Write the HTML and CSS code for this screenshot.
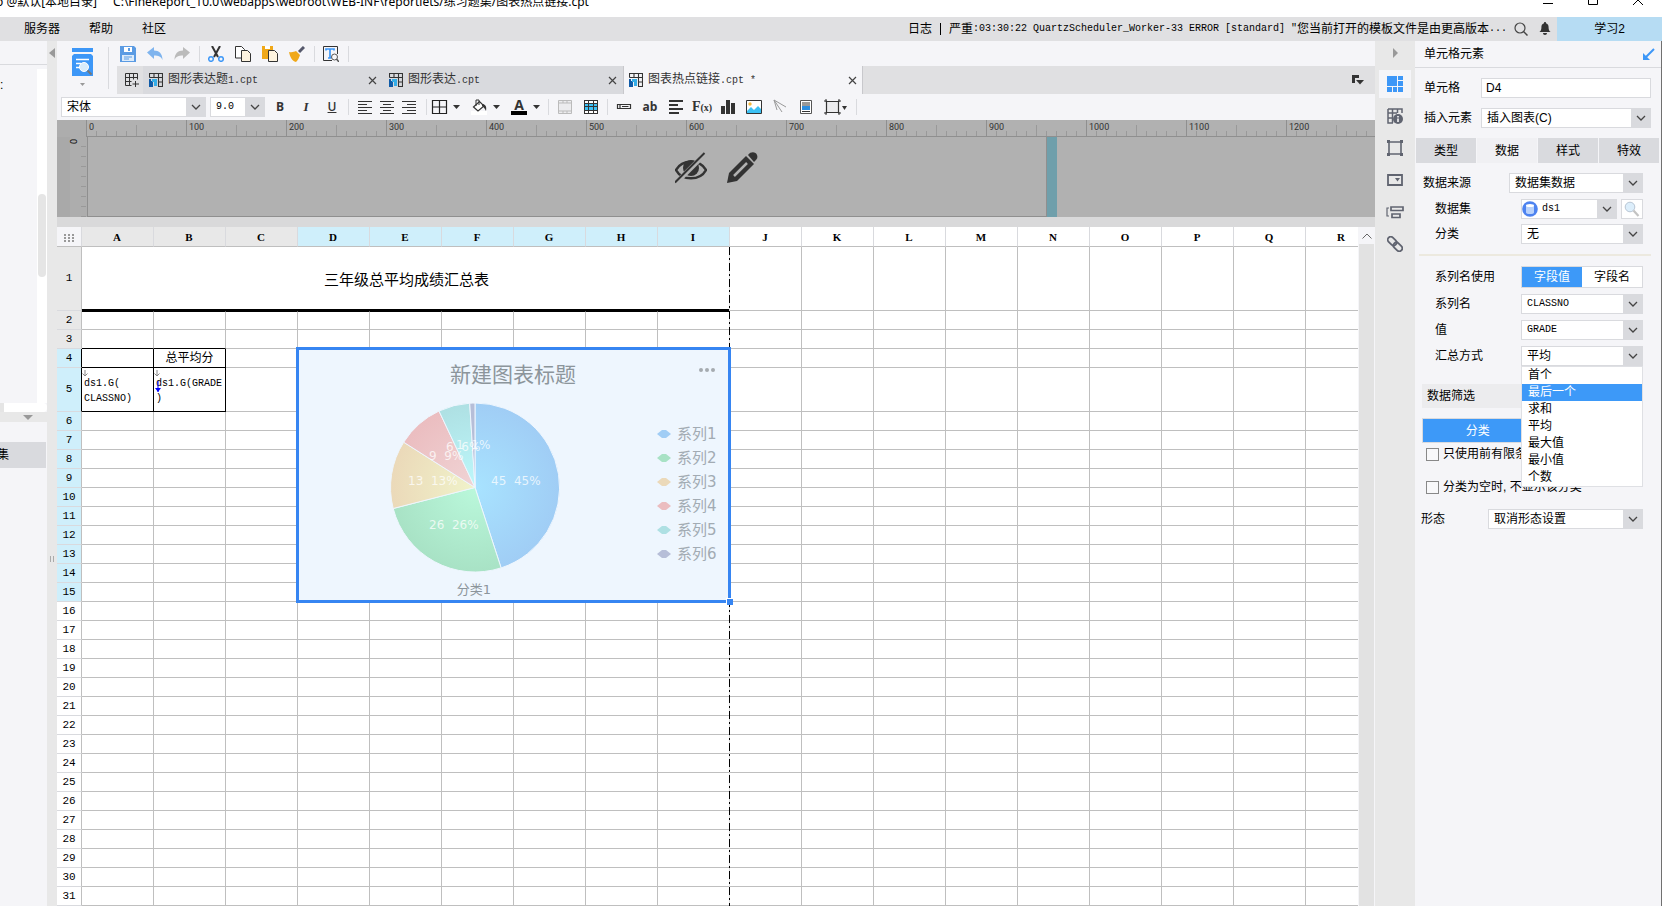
FILE: index.html
```html
<!DOCTYPE html>
<html lang="zh-CN">
<head>
<meta charset="utf-8">
<title>FineReport</title>
<link rel="stylesheet" href="styles.css">
</head>
<body>
<svg class="defs" aria-hidden="true">
  <symbol id="chevron" viewBox="0 0 20 18"><path d="M6 7l4 4 4-4" fill="none" stroke="#444" stroke-width="1.3"/></symbol>
  <symbol id="close" viewBox="0 0 9 9"><path d="M1 1l7 7M8 1l-7 7" stroke="#444" stroke-width="1.2"/></symbol>
  <symbol id="cpt" viewBox="0 0 14 14"><path d="M.5 4.500V.5h13v13H9M.5 4.500h13M5 .5v4M9.500 .5v13M9 9h4.500" fill="none" stroke="#333" stroke-width="1.1"/><path d="M0 6h2v2h2v6H0z" fill="#0f5ba8"/><path d="M3 6h5v7H5V9H3z" fill="#35aee8"/></symbol>
  <symbol id="caret" viewBox="0 0 7 4"><path d="M0 0h7L3.500 4z" fill="#333"/></symbol>
</svg>

<header class="titlebar">
  <span class="titlebar__env">o @默认[本地目录]</span>
  <span class="titlebar__path">C:\FineReport_10.0\webapps\webroot\WEB-INF\reportlets/练习题集/图表热点链接.cpt</span>
  <div class="titlebar__controls">
    <button aria-label="最小化"><svg width="11" height="11"><path d="M0 8.500h10" stroke="#000"/></svg></button>
    <button aria-label="最大化"><svg width="11" height="11"><path d="M.5 .5h9v9h-9z" fill="none" stroke="#000"/></svg></button>
    <button aria-label="关闭"><svg width="11" height="11"><path d="M0 0l10 10M10 0L0 10" stroke="#000"/></svg></button>
  </div>
</header>

<nav class="menubar">
  <button class="menubar__item">服务器</button>
  <button class="menubar__item">帮助</button>
  <button class="menubar__item">社区</button>
  <div class="log">
    <span>日志</span><span class="log__bar"></span><span>严重</span><span class="mono">:03:30:22 QuartzScheduler_Worker-33 ERROR [standard] "</span><span>您当前打开的模板文件是由更高版本</span><span class="mono">...</span>
  </div>
  <button class="menubar__icon" aria-label="搜索"><svg width="14" height="14"><circle cx="6" cy="6" r="5" fill="none" stroke="#444" stroke-width="1.200"/><path d="M9.500 9.500l4 4" stroke="#444" stroke-width="1.500"/></svg></button>
  <button class="menubar__icon menubar__icon--bell" aria-label="通知"><svg width="12" height="14"><path d="M6 0c.8 0 1 .6 1 1.200C9 1.800 9.600 3.500 9.600 5.500c0 2.500.6 3.500 2 4.500H.4c1.400-1 2-2 2-4.500 0-2 .6-3.700 2.600-4.300C5 .6 5.200 0 6 0zM4 11h4c0 1-.8 2-2 2s-2-1-2-2z" fill="#333"/></svg></button>
  <button class="menubar__user">学习2</button>
</nav>

<div class="workspace">
  <aside class="left">
    <div class="left__top"><div class="left__tools"></div>
      <div class="left__tree"><span class="left__fragment">:</span><div class="left__track"><div class="left__thumb"></div></div></div>
      <div class="left__hscroll"></div>
    </div>
    <div class="left__split"><svg width="10" height="5"><path d="M0 0h10L5 5z" fill="#999"/></svg></div>
    <div class="left__bottom"><div class="left__row">集</div></div>
  </aside>
  <div class="splitter">
    <svg width="6" height="10"><path d="M6 0v10L0 5z" fill="#999"/></svg>
    <svg width="4" height="6"><path d="M.5 0v6M3.500 0v6" stroke="#aaa"/></svg>
  </div>

  <main class="main">
    <div class="tools">
      <button class="preview" aria-label="预览">
        <svg width="22" height="28"><path d="M0 0h21v4H0zM0 8l2-2h17l2 2v20H0z" fill="#3d97f7"/><path d="M4 11.500h13M4 15.500h5M4 19.500h4" stroke="#fff" stroke-width="1.500"/><circle cx="12" cy="19" r="4.500" fill="#d9ecfb" stroke="#fff"/><path d="M15.500 22.500l4 4" stroke="#777" stroke-width="2"/></svg>
        <svg width="5" height="3"><path d="M0 0h5L2.500 3z" fill="#999"/></svg>
      </button>
      <span class="sep sep--tall"></span>
      <div class="tools__right">
        <div class="quick">
          <div class="group">
            <button aria-label="保存"><svg width="16" height="16"><path d="M0 0h14l2 2v14H0z" fill="#5b9be3"/><path d="M4 1h8v5H4z" fill="#fff"/><path d="M8 2h2v3H8z" fill="#5b9be3"/><path d="M2 9h12v6H2z" fill="#dcebfa"/><path d="M4 11h8M4 13h5" stroke="#5b9be3"/></svg></button>
            <button aria-label="撤销"><svg width="16" height="16"><path d="M0 6.500L7 1v3.500c5 0 8.500 3 8.500 9.500-1.500-3.500-4-4.500-8.500-4.500V13z" fill="#7fb4ee"/></svg></button>
            <button aria-label="重做"><svg width="16" height="16"><path d="M16 6.500L9 1v3.500C4 4.500.5 7.500.5 14 2 10.500 4.500 9.500 9 9.500V13z" fill="#bbb"/></svg></button>
          </div>
          <span class="sep"></span>
          <div class="group">
            <button aria-label="剪切"><svg width="16" height="16"><path d="M4 0l6 11M12 0L6 11" stroke="#333" stroke-width="2"/><circle cx="3" cy="13" r="2.300" fill="none" stroke="#3d97f7" stroke-width="1.500"/><circle cx="13" cy="13" r="2.300" fill="none" stroke="#3d97f7" stroke-width="1.500"/></svg></button>
            <button aria-label="复制"><svg width="16" height="16"><path d="M.5 .5h6l3 3V12h-9z" fill="#fff" stroke="#333"/><path d="M6.500 4.500h6l3 3v8h-9z" fill="#fdf3df" stroke="#333"/></svg></button>
            <button aria-label="粘贴"><svg width="16" height="16"><path d="M0 0h11v13H0z" fill="#f0a818"/><path d="M3 0h5v3H3z" fill="#fff"/><path d="M6.500 4.500h6l3 3v8h-9z" fill="#fdf3df" stroke="#333"/></svg></button>
            <button aria-label="格式刷"><svg width="16" height="16"><path d="M15 1l-5 5" stroke="#55586b" stroke-width="3"/><path d="M0 6c3 .5 5 0 7-1l4 4c-1 3-2 5-4 7-4-1-6-5-7-10z" fill="#f0a818"/></svg></button>
          </div>
          <span class="sep"></span>
          <div class="group"><button aria-label="查找"><svg width="16" height="16"><path d="M9 14.500H.5V.5h14V8" fill="none" stroke="#333"/><path d="M3 4.500V3h8v1.500M7 3v9M5 12h3.500" fill="none" stroke="#3d97f7" stroke-width="1.700"/><circle cx="11.500" cy="11" r="3" fill="#f5f5f8" stroke="#555"/><path d="M13.500 13l2.500 3" stroke="#555" stroke-width="1.500"/></svg></button></div>
          <span class="sep"></span>
        </div>
        <div class="tabs">
          <button class="tabs__new" aria-label="新建"><svg width="14" height="14"><path d="M.5 .5h12v6M.5 .5v12h6M.5 4.500h12M4.500 .5v12M8.500 .5v6M.5 8.500h6M10.500 8v6M7.500 11h6.500" fill="none" stroke="#333"/></svg></button>
          <button class="tab"><svg width="14" height="14"><use href="#cpt"/></svg><span>图形表达题<i class="mono">1.cpt</i></span><svg class="tab__x" width="9" height="9"><use href="#close"/></svg></button>
          <button class="tab"><svg width="14" height="14"><use href="#cpt"/></svg><span>图形表达<i class="mono">.cpt</i></span><svg class="tab__x" width="9" height="9"><use href="#close"/></svg></button>
          <button class="tab tab--on"><svg width="14" height="14"><use href="#cpt"/></svg><span>图表热点链接<i class="mono">.cpt *</i></span><svg class="tab__x" width="9" height="9"><use href="#close"/></svg></button>
          <button class="tabs__list" aria-label="标签列表"><svg width="12" height="10"><path d="M0 0h7v3H3v5H0z" fill="#333"/><path d="M4 5h8L8 9.500z" fill="#333"/></svg></button>
        </div>
      </div>
    </div>

    <div class="format">
      <div class="combo combo--font"><select aria-label="字体"><option>宋体</option></select><svg class="combo__arrow"><use href="#chevron"/></svg></div>
      <div class="combo combo--size"><select class="mono" aria-label="字号"><option>9.0</option></select><svg class="combo__arrow"><use href="#chevron"/></svg></div>
      <div class="group group--a">
        <button class="glyph">B</button><button class="glyph glyph--i">I</button><button class="glyph glyph--u">U</button>
      </div>
      <span class="sep"></span>
      <div class="group group--b">
        <button aria-label="左对齐"><svg width="16" height="16"><path d="M1 2.500h14M1 5.500h9M1 8.500h14M1 11.500h9M1 14.500h14" stroke="#333"/></svg></button>
        <button aria-label="居中"><svg width="16" height="16"><path d="M1 2.500h14M4 5.500h8M1 8.500h14M4 11.500h8M1 14.500h14" stroke="#333"/></svg></button>
        <button aria-label="右对齐"><svg width="16" height="16"><path d="M1 2.500h14M6 5.500h9M1 8.500h14M6 11.500h9M1 14.500h14" stroke="#333"/></svg></button>
      </div>
      <span class="sep sep--tight"></span>
      <div class="group">
        <button class="wide" aria-label="边框"><svg width="30" height="16"><path d="M1.500 1.500h14v13h-14zM8.500 1.500v13M1.500 8h14" fill="none" stroke="#222" stroke-width="1.200"/><path d="M22 6h7l-3.500 4z" fill="#333"/></svg></button>
        <button class="wide" aria-label="背景"><svg width="30" height="16"><path d="M0 12h16v4H0z" fill="#fff"/><path d="M2.500 8l6-5.500 4.500 4.500-6 5z" fill="#fff" stroke="#333" stroke-width="1.200"/><path d="M5 7V1h3v5" fill="none" stroke="#333"/><path d="M11 5c3 0 5 2 4 7-1-2-2-4-4-5z" fill="#333"/><path d="M22 6h7l-3.500 4z" fill="#333"/></svg></button>
        <button class="wide fontcolor" aria-label="字体颜色"><span>A</span><svg width="7" height="4"><use href="#caret"/></svg></button>
      </div>
      <span class="sep"></span>
      <div class="group">
        <button aria-label="合并单元格"><svg width="16" height="16"><path d="M1.500 1.500h13v13h-13zM1.500 4h13M1.500 12h13M6 1.500V4M10 1.500V4M6 12v2.500M10 12v2.500" fill="#ececee" stroke="#bbb"/></svg></button>
        <button aria-label="取消合并"><svg width="16" height="16"><path d="M1 1h14v14H1z" fill="#333"/><path d="M2 2h3v2H2zM6 2h4v2H6zM11 2h3v2h-3zM2 12h3v2H2zM6 12h4v2H6zM11 12h3v2h-3z" fill="#fff"/><path d="M2 5h3v2H2zM6 5h4v2H6zM11 5h3v2h-3zM2 8h3v3H2zM6 8h4v3H6zM11 8h3v3h-3z" fill="#3cc1f4"/></svg></button>
      </div>
      <span class="sep"></span>
      <div class="group">
        <button aria-label="控件"><svg width="16" height="16"><path d="M1.500 5.500h13v4h-13zM4 6v3M6 7.500h6.500" fill="none" stroke="#333" stroke-width="1.200"/></svg></button>
        <button class="glyph glyph--ab">ab</button>
        <button aria-label="段落"><svg width="16" height="16"><path d="M1 2h14M1 6h9M1 10h14M1 14h10" stroke="#333" stroke-width="1.800"/></svg></button>
        <button class="glyph glyph--fx">F<small>(x)</small></button>
        <button aria-label="图表"><svg width="16" height="16"><path d="M1 7h4v8H1zM6 1h4v14H6zM11 4h4v11h-4z" fill="#333"/></svg></button>
        <button aria-label="图片"><svg width="16" height="16"><path d="M.5 1.500h15v13H.5z" fill="#fff" stroke="#333"/><circle cx="4" cy="5" r="1.700" fill="#f5b83d"/><path d="M1 12l4-4 3 3 4-4 3 3v4H1z" fill="#3cc1f4"/></svg></button>
        <button aria-label="斜线"><svg width="16" height="16"><path d="M14 8L2 1l8 12M2 1l3 10" fill="none" stroke="#999"/></svg></button>
        <button aria-label="子报表"><svg width="16" height="16"><path d="M2.500 1.500h11v13h-11z" fill="#fff" stroke="#555"/><path d="M4 4h8M4 6h8M4 12.500h8" stroke="#333"/><path d="M4 7h8v4H4z" fill="#2b8de0"/></svg></button>
        <button class="wide" aria-label="冻结"><svg width="24" height="16"><path d="M2.500 2.500h12v11h-12z" fill="#ececee" stroke="#333" stroke-width="1.200"/><path d="M0 2h3M14 2h3M0 14h3M14 14h3M2 0v3M15 0v3M2 13v3M15 13v3" stroke="#333"/><path d="M18 7h5l-2.500 4z" fill="#333"/></svg></button>
      </div>
      <span class="sep"></span>
    </div>

    <section class="ruler">
      <div class="ruler__top"><div class="ruler__scale" id="scale"></div></div>
      <div class="ruler__body">
        <div class="ruler__side"><span>0</span></div>
        <div class="page">
          <svg width="32" height="32"><path d="M1 18C7 7 25 7 31 18 25 29 7 29 1 18z" fill="none" stroke="#333" stroke-width="2.500"/><circle cx="16" cy="16" r="8" fill="#333"/><path d="M0 32L30 2" stroke="#b1b1b1" stroke-width="5"/><path d="M0 30.500L29.500 1" stroke="#333" stroke-width="2"/></svg>
          <svg width="32" height="32"><path d="M1 31l2-10L20 4l8 8-17 17z" fill="#333"/><path d="M22 3c3-4 8-3 9 0s0 4-3 7z" fill="#333"/><path d="M8 24L21 11" stroke="#b1b1b1" stroke-width="2.500"/></svg>
        </div>
        <div class="page__edge"></div>
      </div>
    </section>

    <section class="sheetwrap">
      <div class="sheet">
        <table class="grid"><thead id="cols"></thead><tbody id="rows"></tbody></table>
        <div class="pagebreak"></div>
        <div class="chart">
          <svg width="429" height="250" viewBox="3 3 429 250" role="img" aria-label="新建图表标题">
            <defs>
              <radialGradient id="g1" gradientUnits="userSpaceOnUse" cx="0" cy="0" r="85"><stop offset="0" stop-color="#a8e3ff"/><stop offset="1" stop-color="#a0cdf5"/></radialGradient>
              <radialGradient id="g2" gradientUnits="userSpaceOnUse" cx="0" cy="0" r="85"><stop offset="0" stop-color="#baf8db"/><stop offset="1" stop-color="#a8e2c5"/></radialGradient>
              <radialGradient id="g3" gradientUnits="userSpaceOnUse" cx="0" cy="0" r="85"><stop offset="0" stop-color="#f0f3ca"/><stop offset="1" stop-color="#ebd9b9"/></radialGradient>
              <radialGradient id="g4" gradientUnits="userSpaceOnUse" cx="0" cy="0" r="85"><stop offset="0" stop-color="#f0d4d5"/><stop offset="1" stop-color="#ebbdc0"/></radialGradient>
              <radialGradient id="g5" gradientUnits="userSpaceOnUse" cx="0" cy="0" r="85"><stop offset="0" stop-color="#bdf8fb"/><stop offset="1" stop-color="#aee0e3"/></radialGradient>
            </defs>
            <text x="217" y="35" class="chart__title">新建图表标题</text>
            <g fill="#a5abb0"><circle cx="405" cy="23" r="2"/><circle cx="411" cy="23" r="2"/><circle cx="417" cy="23" r="2"/></g>
            <g transform="translate(179 140.500)" stroke="#eef6fe">
              <path fill="url(#g1)" d="M0 0V-84.500A84.500 84.500 0 0 1 26.100 80.400z"/>
              <path fill="url(#g2)" d="M0 0L26.100 80.400A84.500 84.500 0 0 1-81.800 21z"/>
              <path fill="url(#g3)" d="M0 0L-81.800 21A84.500 84.500 0 0 1-71.300-45.300z"/>
              <path fill="url(#g4)" d="M0 0L-71.300-45.300A84.500 84.500 0 0 1-36-76.500z"/>
              <path fill="url(#g5)" d="M0 0L-36-76.500A84.500 84.500 0 0 1-5.300-84.300z"/>
              <path fill="#b6bed8" d="M0 0L-5.300-84.300A84.500 84.500 0 0 1 0-84.500z"/>
            </g>
            <g class="chart__labels">
              <text x="195" y="138">45  45%</text><text x="133" y="182">26  26%</text><text x="112" y="138">13  13%</text>
              <text x="133" y="113">9  9%</text><text x="150" y="104">6  6%</text><text x="160" y="102">1  1%</text>
            </g>
            <text x="178" y="247" class="chart__axis">分类1</text>
            <g id="legend" class="chart__legend"></g>
          </svg>
          <span class="chart__handle"></span>
        </div>
      </div>
      <div class="vscroll"><button aria-label="向上滚动"><svg width="10" height="6"><path d="M.5 5.500L5 1l4.500 4.500" fill="none" stroke="#666"/></svg></button></div>
    </section>
  </main>

  <nav class="rail">
    <svg class="rail__fold" width="5" height="10"><path d="M0 0v10l5-5z" fill="#999"/></svg>
    <button class="rail__on" aria-label="单元格元素"><svg width="16" height="16"><path d="M0 0h10v10H0zM11 0h5v4h-5zM11 5h5v5h-5zM0 11h5v5H0zM6 11h4v5H6zM11 11h5v5h-5z" fill="#3d97f7"/></svg></button>
    <button aria-label="单元格属性"><svg width="16" height="16"><path d="M1 1h14v4M1 1v14h5M1 5h9M1 10h5M5.500 1v14M10.500 1v4" fill="none" stroke="#606470" stroke-width="1.500"/><circle cx="11" cy="11" r="5" fill="#606470"/><path d="M11 8v1.500M11 10.500V14" stroke="#fff" stroke-width="1.500"/></svg></button>
    <button aria-label="悬浮元素"><svg width="16" height="16"><path d="M2 2h12v12H2z" fill="none" stroke="#606470" stroke-width="1.600"/><path d="M0 0h3v3H0zM13 0h3v3h-3zM0 13h3v3H0zM13 13h3v3h-3z" fill="#606470"/></svg></button>
    <button aria-label="控件设置"><svg width="16" height="16"><path d="M1 3h14v10H1z" fill="none" stroke="#606470" stroke-width="1.800"/><path d="M8 6h5l-2.500 3.500z" fill="#606470"/></svg></button>
    <button aria-label="条件属性"><svg width="18" height="16"><path d="M3 4H1v8h2" fill="none" stroke="#606470" stroke-width="1.200"/><path d="M5 3h12v3.500H5zM6 10h8v3.500H6z" fill="none" stroke="#606470" stroke-width="1.700"/></svg></button>
    <button aria-label="超级链接"><svg width="16" height="16"><g transform="rotate(45 8 8)" fill="none" stroke="#606470" stroke-width="1.800"><rect x="-1" y="5" width="10" height="6" rx="3"/><rect x="7" y="5" width="10" height="6" rx="3"/></g></svg></button>
  </nav>

  <aside class="panel">
    <div class="panel__head"><h2>单元格元素</h2><button aria-label="收起"><svg width="12" height="12"><path d="M11 1L2 10" stroke="#3d97f7" stroke-width="2"/><path d="M0 5v7h7z" fill="#3d97f7"/></svg></button></div>
    <form class="form">
      <div class="field field--wide gap-l"><label for="cell">单元格</label><input id="cell" class="w-170" value="D4"></div>
      <div class="field field--wide gap-l"><label for="ins">插入元素</label><div class="combo w-170"><select id="ins"><option>插入图表(C)</option></select><svg class="combo__arrow"><use href="#chevron"/></svg></div></div>
      <div class="ptabs gap-l"><button type="button">类型</button><button type="button" class="on">数据</button><button type="button">样式</button><button type="button">特效</button></div>
      <div class="field gap-l"><label for="src">数据来源</label><div class="combo w-134"><select id="src"><option>数据集数据</option></select><svg class="combo__arrow"><use href="#chevron"/></svg></div></div>
      <div class="field field--in gap-m"><label for="ds">数据集</label>
        <div class="dsrow w-122"><div class="combo combo--ds"><select id="ds" class="mono"><option>ds1</option></select><svg class="combo__icon" width="16" height="16"><circle cx="8" cy="8" r="7.800" fill="#4d83f0"/><path d="M4 4.500v7c0 2 8 2 8 0v-7z" fill="#b9d2fb"/><ellipse cx="8" cy="4.500" rx="4" ry="1.500" fill="#fff"/></svg><svg class="combo__arrow"><use href="#chevron"/></svg></div>
        <button type="button" class="find" aria-label="预览数据"><svg width="16" height="16"><circle cx="6" cy="6" r="4.800" fill="#dceefb" stroke="#b9c6d4"/><path d="M9.500 9.500l5 5.500" stroke="#c3c3c3" stroke-width="2.200"/></svg></button></div></div>
      <div class="field field--in gap-s"><label for="cat">分类</label><div class="combo w-122"><select id="cat"><option>无</option></select><svg class="combo__arrow"><use href="#chevron"/></svg></div></div>
      <hr class="rule">
      <div class="field field--in gap-l"><span>系列名使用</span><div class="seg w-122"><button type="button" class="on">字段值</button><button type="button">字段名</button></div></div>
      <div class="field field--in gap-m"><label for="ser">系列名</label><div class="combo w-122"><select id="ser" class="mono"><option>CLASSNO</option></select><svg class="combo__arrow"><use href="#chevron"/></svg></div></div>
      <div class="field field--in gap-m"><label for="val">值</label><div class="combo w-122"><select id="val" class="mono"><option>GRADE</option></select><svg class="combo__arrow"><use href="#chevron"/></svg></div></div>
      <div class="field field--in gap-m"><label for="agg">汇总方式</label>
        <div class="combo w-122"><select id="agg"><option>平均</option></select><svg class="combo__arrow"><use href="#chevron"/></svg>
          <ul class="menu"><li>首个</li><li class="on">最后一个</li><li>求和</li><li>平均</li><li>最大值</li><li>最小值</li><li>个数</li></ul>
        </div></div>
      <h3 class="band">数据筛选</h3>
      <div class="seg seg--filter"><button type="button" class="on">分类</button><button type="button" aria-label="系列"></button></div>
      <label class="check"><input type="checkbox">只使用前有限条</label>
      <label class="check check--2"><input type="checkbox">分类为空时, 不显示该分类</label>
      <div class="field field--out"><label for="shape">形态</label><div class="combo w-155"><select id="shape"><option>取消形态设置</option></select><svg class="combo__arrow"><use href="#chevron"/></svg></div></div>
    </form>
  </aside>
</div>
<script src="sheet.js"></script>
</body>
</html>
```
FILE: styles.css
```css
* { box-sizing: border-box; }
body {
  margin: 0; height: 100vh; overflow: hidden; display: flex; flex-direction: column;
  font: 12px/16px "Liberation Sans", "Noto Sans CJK SC", sans-serif; color: #000; background: #f5f5f8;
}
button, input, select { font: inherit; color: inherit; margin: 0; padding: 0; border: 0; background: none; border-radius: 0; }
svg { display: block; flex: none; }
.defs { position: absolute; width: 0; height: 0; }
.mono { font-family: "Liberation Mono", "Noto Sans CJK SC", monospace; font-size: 10px; font-style: normal; }

.titlebar { height: 17px; flex: none; display: flex; gap: 16px; overflow: hidden; background: #fff; white-space: nowrap; font: 12px/4px "Noto Sans", "Noto Sans CJK SC", sans-serif; }
.titlebar__env { margin-left: -4px; }
.titlebar__controls { margin-left: auto; display: flex; gap: 34px; padding-right: 18px; height: 6px; align-items: flex-end; }

.menubar { height: 24px; flex: none; display: flex; align-items: center; background: #e0e0e2; padding-left: 24px; white-space: nowrap; }
.menubar__item { margin-right: 29px; }
.log { margin-left: auto; display: flex; align-items: center; white-space: pre; }
.log__bar { width: 1px; height: 12px; background: #000; margin: 0 8px; }
.menubar__icon { width: 14px; margin-left: 7px; }
.menubar__icon--bell { margin: 0 4px 0 11px; }
.menubar__user { width: 105px; height: 24px; background: #b6dcf3; }

.workspace { flex: 1; min-height: 0; display: flex; }
.left { width: 47px; flex: none; display: flex; flex-direction: column; }
.left__top { height: 371px; display: flex; flex-direction: column; }
.left__tools { height: 24px; border-bottom: 1px solid #d9dade; margin-bottom: 4px; }
.left__tree { flex: 1; display: flex; justify-content: space-between; overflow: hidden; }
.left__fragment { padding-top: 8px; width: 3px; overflow: hidden; }
.left__track { width: 10px; background: #fff; padding: 125px 1px 0; }
.left__thumb { height: 83px; border-radius: 4px; background: #e5e5e5; }
.left__hscroll { height: 9px; background: #fff; border-left: 4px solid #e5e5e5; border-radius: 0 4px 4px 0; }
.left__split { height: 10px; background: #e8e8e8; display: flex; justify-content: center; align-items: center; padding-left: 8px; }
.left__bottom { padding-top: 20px; }
.left__row { height: 26px; margin-right: 1px; background: #d9dade; line-height: 26px; overflow: hidden; text-indent: -3px; }
.splitter { width: 10px; flex: none; background: #e8e8e8; display: flex; flex-direction: column; align-items: center; padding-top: 7px; gap: 498px; }

.main { flex: 1; min-width: 0; display: flex; flex-direction: column; }
.tools { display: flex; height: 53px; flex: none; }
.preview { width: 51px; display: flex; flex-direction: column; align-items: center; gap: 7px; padding-top: 7px; justify-content: flex-start; }
.sep { width: 1px; height: 16px; background: #d9dade; margin: 0 8px; flex: none; }
.sep--tall { height: 42px; margin: 6px 8px 0 0; }
.sep--tight { margin: 0 4px 0 9px; }
.tools__right { flex: 1; min-width: 0; }
.quick { height: 25px; display: flex; align-items: center; padding-left: 3px; }
.quick .group { gap: 11px; }
.quick .sep { margin: 0 8px 0 9px; }
.group { display: flex; gap: 10px; align-items: center; }
.group button { width: 16px; height: 16px; flex: none; }
.group .wide { width: auto; }
.tabs { height: 28px; display: flex; background: #e0e0e2; }
.tabs__new { width: 26px; padding-left: 8px; }
.tab { width: 240px; display: flex; align-items: center; gap: 5px; padding: 0 6px; background: #d9dade; color: #333; }
.tab--on { background: #f5f5f8; border: solid #c8c8cc; border-width: 0 1px; padding: 0 5px; }
.tab__x { margin-left: auto; }
.tabs__list { margin-left: auto; padding-right: 11px; }

.format { height: 26px; flex: none; display: flex; align-items: center; padding-left: 4px; }
.combo { display: grid; position: relative; height: 20px; flex: none; }
.combo > select { grid-area: 1/1; appearance: none; width: 100%; height: 20px; padding: 0 20px 0 5px; background: #fff; border: 1px solid #d9dade; line-height: 18px; }
.combo > .combo__arrow { grid-area: 1/1; justify-self: end; width: 20px; height: 20px; background: #d9dade; pointer-events: none; }
.combo--font { width: 145px; margin-right: 4px; }
.combo--size { width: 55px; margin-right: 7px; }
.combo > select.mono { font-size: 10px; }
.group--b { gap: 6px; }
.glyph { font: bold 12px/16px "Open Sans", sans-serif; color: #333; }
.glyph--i { font-family: "Liberation Serif", serif; font-style: italic; font-size: 13px; }
.glyph--u { text-decoration: underline; font-weight: 600; }
.group .glyph--ab, .group .glyph--fx { display: flex; justify-content: center; align-items: baseline; }
.glyph--fx { font-family: "Liberation Serif", serif; font-size: 14px; }
.glyph--fx small { font-size: 10px; }
.fontcolor { display: flex; align-items: center; gap: 6px; }
.fontcolor span { width: 16px; height: 16px; border-bottom: 4px solid #000; font: bold 14px/11px "Open Sans", sans-serif; color: #333; }

.ruler { flex: none; background: #b1b1b1; overflow: hidden; }
.ruler__top { height: 17px; padding-left: 29px; background: #adadad; overflow: hidden; }
.ruler__scale {
  height: 17px; display: flex; border-bottom: 1px solid #8f8f8f;
  background:
    repeating-linear-gradient(90deg, #8f8f8f 0 1px, transparent 1px 100px) 0 0 / 100% 16px no-repeat,
    repeating-linear-gradient(90deg, #999 0 1px, transparent 1px 50px) 0 5px / 100% 11px no-repeat,
    repeating-linear-gradient(90deg, #999 0 1px, transparent 1px 10px) 0 11px / 100% 5px no-repeat, #b1b1b1;
}
.ruler__scale span { width: 100px; flex: none; padding-left: 3px; font: 9px/14px Roboto, sans-serif; color: #333; }
.ruler__body { height: 80px; display: flex; padding-left: 13px; background: linear-gradient(90deg, #a9a9a9 13px, transparent 13px); }
.ruler__side { width: 17px; background: repeating-linear-gradient(180deg, transparent 0 9px, #999 9px 10px) 11px 0 / 5px 100% no-repeat, #adadad; }
.ruler__side span { display: block; width: 8px; font: 9px/6px Roboto, sans-serif; transform: rotate(-90deg); }
.page { width: 960px; flex: none; border: 1px solid #8f8f8f; border-top-width: 0; display: flex; justify-content: flex-end; gap: 19px; padding: 15px 288px 0 0; }
.page__edge { width: 10px; background: #6f9fab; flex: none; }

.sheetwrap { flex: 1; min-height: 0; display: flex; border-top: 10px solid #d9d9da; background: #fff; }
.sheet { flex: 1; min-width: 0; position: relative; overflow: hidden; }
.grid { width: 1321px; table-layout: fixed; border-collapse: separate; border-spacing: 0; }
.grid th, .grid td { padding: 0; border: solid #bfbfbf; border-width: 0 1px 1px 0; height: 19px; line-height: 17px; }
.grid th { font: 11px/17px "Liberation Mono", monospace; }
.grid thead th { height: 20px; width: 72px; border-right-color: #d9dade; padding: 2px 1px 0 0; font: bold 11px/17px "Liberation Serif", serif; }
.grid thead th:first-child { width: 25px; background: #f5f5f8; }
.grid thead svg { margin: 0 auto; }
.grid tbody th { border-bottom-color: #d9dade; }
.grid .dim { background: #e8e8e8; }
.grid .sel { background: #cfeffb; }
.grid .r1 th, .grid .r1 td { height: 64px; }
.grid .r5 th, .grid .r5 td { height: 44px; }
.grid .title { font-size: 15px; text-align: center; border-bottom: 2px solid #000; padding: 2px 0 0 2px; }
.grid .r2 td:nth-child(-n+10) { border-top: 1px solid #000; }
.grid .r3 td:nth-child(-n+3) { border-bottom-color: #000; }
.grid .r4 :nth-child(-n+3), .grid .r5 :nth-child(-n+3) { border-right-color: #000; }
.grid .r4 td:nth-child(-n+3), .grid .r5 td:nth-child(-n+3) { border-bottom-color: #000; text-align: center; }
.grid .r5 td.formula { text-align: left; padding: 2px 0 0 2px; font: 10px/15px "Liberation Mono", monospace; position: relative; white-space: nowrap; }
.formula svg { position: absolute; left: 0; top: 2px; }
.pagebreak { position: absolute; left: 672px; top: 20px; bottom: 0; width: 1px; background: repeating-linear-gradient(180deg, #000 0 8px, #ddd 8px 11px, #000 11px 13px, #ddd 13px 16px); }
.chart { position: absolute; left: 239px; top: 120px; border: 3px solid #3685f2; background: #eef6fe; font-family: "DejaVu Sans", "Noto Sans CJK SC", sans-serif; }
.chart__title { font-size: 21px; fill: #8c959b; text-anchor: middle; }
.chart__axis { font-size: 13px; fill: #8c959b; text-anchor: middle; }
.chart__labels { font-size: 12px; fill: #fff; fill-opacity: .75; }
.chart__labels text { white-space: pre; }
.chart__legend { font-size: 15px; }
.chart__legend text { fill: #a2abb3; }
.chart__handle { position: absolute; right: -5px; bottom: -5px; width: 7px; height: 7px; background: #3685f2; border: solid #fff; border-width: 1px 0 0 1px; }
.vscroll { width: 17px; flex: none; background: #e2e2e2; border: solid #f5f5f8; border-width: 0 1px; }
.vscroll button { width: 100%; height: 17px; background: #f5f5f8; display: grid; place-items: center; }

.rail { width: 40px; flex: none; background: #e8e8e8; display: flex; flex-direction: column; align-items: center; gap: 4px; padding-top: 7px; }
.rail__fold { margin-bottom: 8px; }
.rail button { width: 32px; height: 28px; display: grid; place-items: center; }
.rail .rail__on { background: #f5f5f8; }

.panel { width: 247px; flex: none; border-right: 1px solid #707070; }
.panel__head { height: 27px; display: flex; align-items: center; justify-content: space-between; padding: 0 6px 0 9px; border-bottom: 1px solid #d9dade; }
.panel h2, .panel h3 { margin: 0; font: inherit; }
.form { display: flex; flex-direction: column; white-space: nowrap; }
.field { display: flex; align-items: center; justify-content: space-between; padding: 0 18px 0 8px; }
.field--wide { padding: 0 10px 0 9px; }
.field--in { padding-left: 20px; }
.gap-l { margin-top: 10px; }
.gap-m { margin-top: 6px; }
.gap-s { margin-top: 5px; }
.w-170 { width: 170px; }
.w-155 { width: 155px; }
.w-134 { width: 134px; }
.w-122 { width: 122px; }
input#cell { height: 20px; padding: 0 4px; border: 1px solid #d9dade; background: #fff; }
.ptabs { display: grid; grid-template-columns: repeat(4, 1fr); gap: 1px; padding: 0 2px 0 1px; }
.ptabs button { height: 25px; background: #d9dade; }
.ptabs .on { background: #f0f0f3; }
.dsrow { display: flex; justify-content: space-between; }
.combo--ds { width: 96px; }
.combo--ds > select { padding-left: 20px; }
.combo__icon { grid-area: 1/1; align-self: center; margin-left: 1px; }
.find { width: 22px; height: 20px; border: 1px solid #d9dade; background: #fff; display: grid; place-items: center; }
.rule { width: 232px; height: 2px; border: 0; margin: 10px 0 0 4px; background: #ece9df; }
.seg { display: grid; grid-template-columns: 1fr 1fr; height: 22px; border: 1px solid #d9dade; background: #fff; }
.seg .on { background: #3d99f8; color: #fff; }
.menu { position: absolute; z-index: 2; top: 20px; left: 0; width: 100%; margin: 0; padding: 0; list-style: none; background: #fff; border: 1px solid #dfe0e4; }
.menu li { padding-left: 6px; height: 17px; line-height: 17px; }
.menu .on { background: #3d99f8; color: #fff; }
.panel .band { margin: 18px 18px 0 7px; padding-left: 5px; line-height: 24px; background: #ececee; }
.seg--filter { margin: 10px 18px 0 7px; height: 25px; }
.check { display: flex; align-items: center; height: 14px; margin: 4px 0 0 11px; gap: 4px; }
.check--2 { margin-top: 19px; }
.check input { appearance: none; width: 13px; height: 13px; border: 1px solid #888; background: #f8f8fa; }
.field--out { padding-left: 6px; margin-top: 15px; }
```
FILE: sheet.js
```js
const letters = 'ABCDEFGHIJKLMNOPQR'.split('');
const dots = '<svg width="10" height="8">' + [0, 4, 8].map(x => [0, 3, 6].map(y => `<rect x="${x}" y="${y}" width="2" height="2" fill="#999"/>`).join('')).join('') + '</svg>';
document.getElementById('cols').innerHTML = `<tr><th>${dots}</th>` +
  letters.map((c, i) => `<th class="${i < 3 ? 'dim' : i < 9 ? 'sel' : ''}">${c}</th>`).join('') + '</tr>';

const down = '<svg width="6" height="7"><path d="M3 0v6M.5 3.500L3 6l2.500-2.500" fill="none" stroke="#888"/></svg>';
const blue = '<svg width="8" height="24"><path d="M4 11v11" stroke="#00f"/><path d="M1 18h6l-3 4z" fill="#00f"/></svg>';
const content = {
  B4: '总平均分',
  A5: down + 'ds1.G(<br>CLASSNO)',
  B5: down + blue + 'ds1.G(GRADE<br>)'
};
let html = '';
for (let r = 1; r <= 31; r++) {
  html += `<tr class="r${r}"><th class="${r < 4 ? 'dim' : r < 16 ? 'sel' : ''}">${r}</th>`;
  letters.forEach((c, i) => {
    if (r === 1 && i < 9) {
      if (i === 0) html += '<td class="title" colspan="9">三年级总平均成绩汇总表</td>';
      return;
    }
    const text = content[c + r] || '';
    html += `<td${r === 5 && text ? ' class="formula"' : ''}>${text}</td>`;
  });
  html += '</tr>';
}
document.getElementById('rows').innerHTML = html;

document.getElementById('scale').innerHTML = Array.from({ length: 13 }, (_, i) => `<span>${i * 100}</span>`).join('');

document.getElementById('legend').innerHTML = ['#a0cdf5', '#a8e2c5', '#ebd9b9', '#ebbdc0', '#aee0e3', '#b6bed8'].map((color, i) => {
  const y = 87 + i * 24;
  return `<path d="M361 ${y}l5-4h4l5 4-5 4h-4z" fill="${color}"/><text x="381" y="${y + 5}">系列${i + 1}</text>`;
}).join('');
```
